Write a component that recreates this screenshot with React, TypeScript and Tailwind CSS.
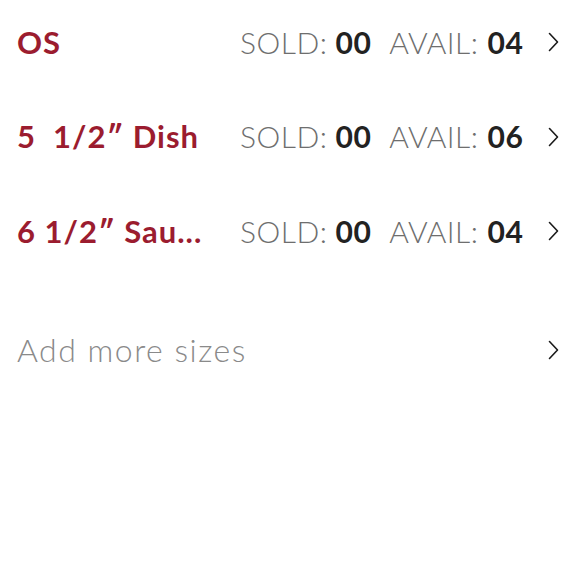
import React from 'react';

type Size = { name: string; sold: string; avail: string };

const sizes: Size[] = [
    { name: 'OS', sold: '00', avail: '04' },
    { name: '5  1/2\u2033 Dish', sold: '00', avail: '06' },
    { name: '6 1/2\u2033 Sau...', sold: '00', avail: '04' },
];

function Chevron() {
    return (
        <svg width="12" height="20" viewBox="0 0 12 20" fill="none" className="shrink-0">
            <polyline points="2.5,1.5 10.5,10 2.5,18.5" stroke="#1a1a1a" strokeWidth="1.6" strokeLinecap="round" strokeLinejoin="round" />
        </svg>
    );
}

function SizeRow({ size }: { size: Size }) {
    return (
        <div className="flex h-[40px] items-center">
            <div className="w-[223px] whitespace-pre text-[31px] font-bold tracking-[1px] text-[#9b1c2f]">
                {size.name}
            </div>
            <div className="flex flex-1 items-baseline text-[30px] tracking-[0.5px]">
                <span className="font-light text-[#6e6e6e]">SOLD:</span>
                <span className="ml-[8px] font-bold text-[#222]">{size.sold}</span>
                <span className="ml-[18px] font-light text-[#6e6e6e]">AVAIL:</span>
                <span className="ml-[9px] font-bold text-[#222]">{size.avail}</span>
            </div>
            <Chevron />
        </div>
    );
}

export default function App() {
    return (
        <div
            className="h-[580px] w-[580px] bg-white pl-[17px] pr-[21px] pt-[22px]"
            style={{ fontFamily: 'Lato, "Noto Sans", sans-serif' }}
        >
            <div className="flex flex-col gap-[54.5px]">
                {sizes.map((s) => (
                    <SizeRow key={s.name} size={s} />
                ))}
            </div>
            <div className="mt-[79px] flex h-[40px] items-center justify-between">
                <span className="text-[32px] font-light tracking-[1.5px] text-[#8a8a8a]">Add more sizes</span>
                <Chevron />
            </div>
        </div>
    );
}
